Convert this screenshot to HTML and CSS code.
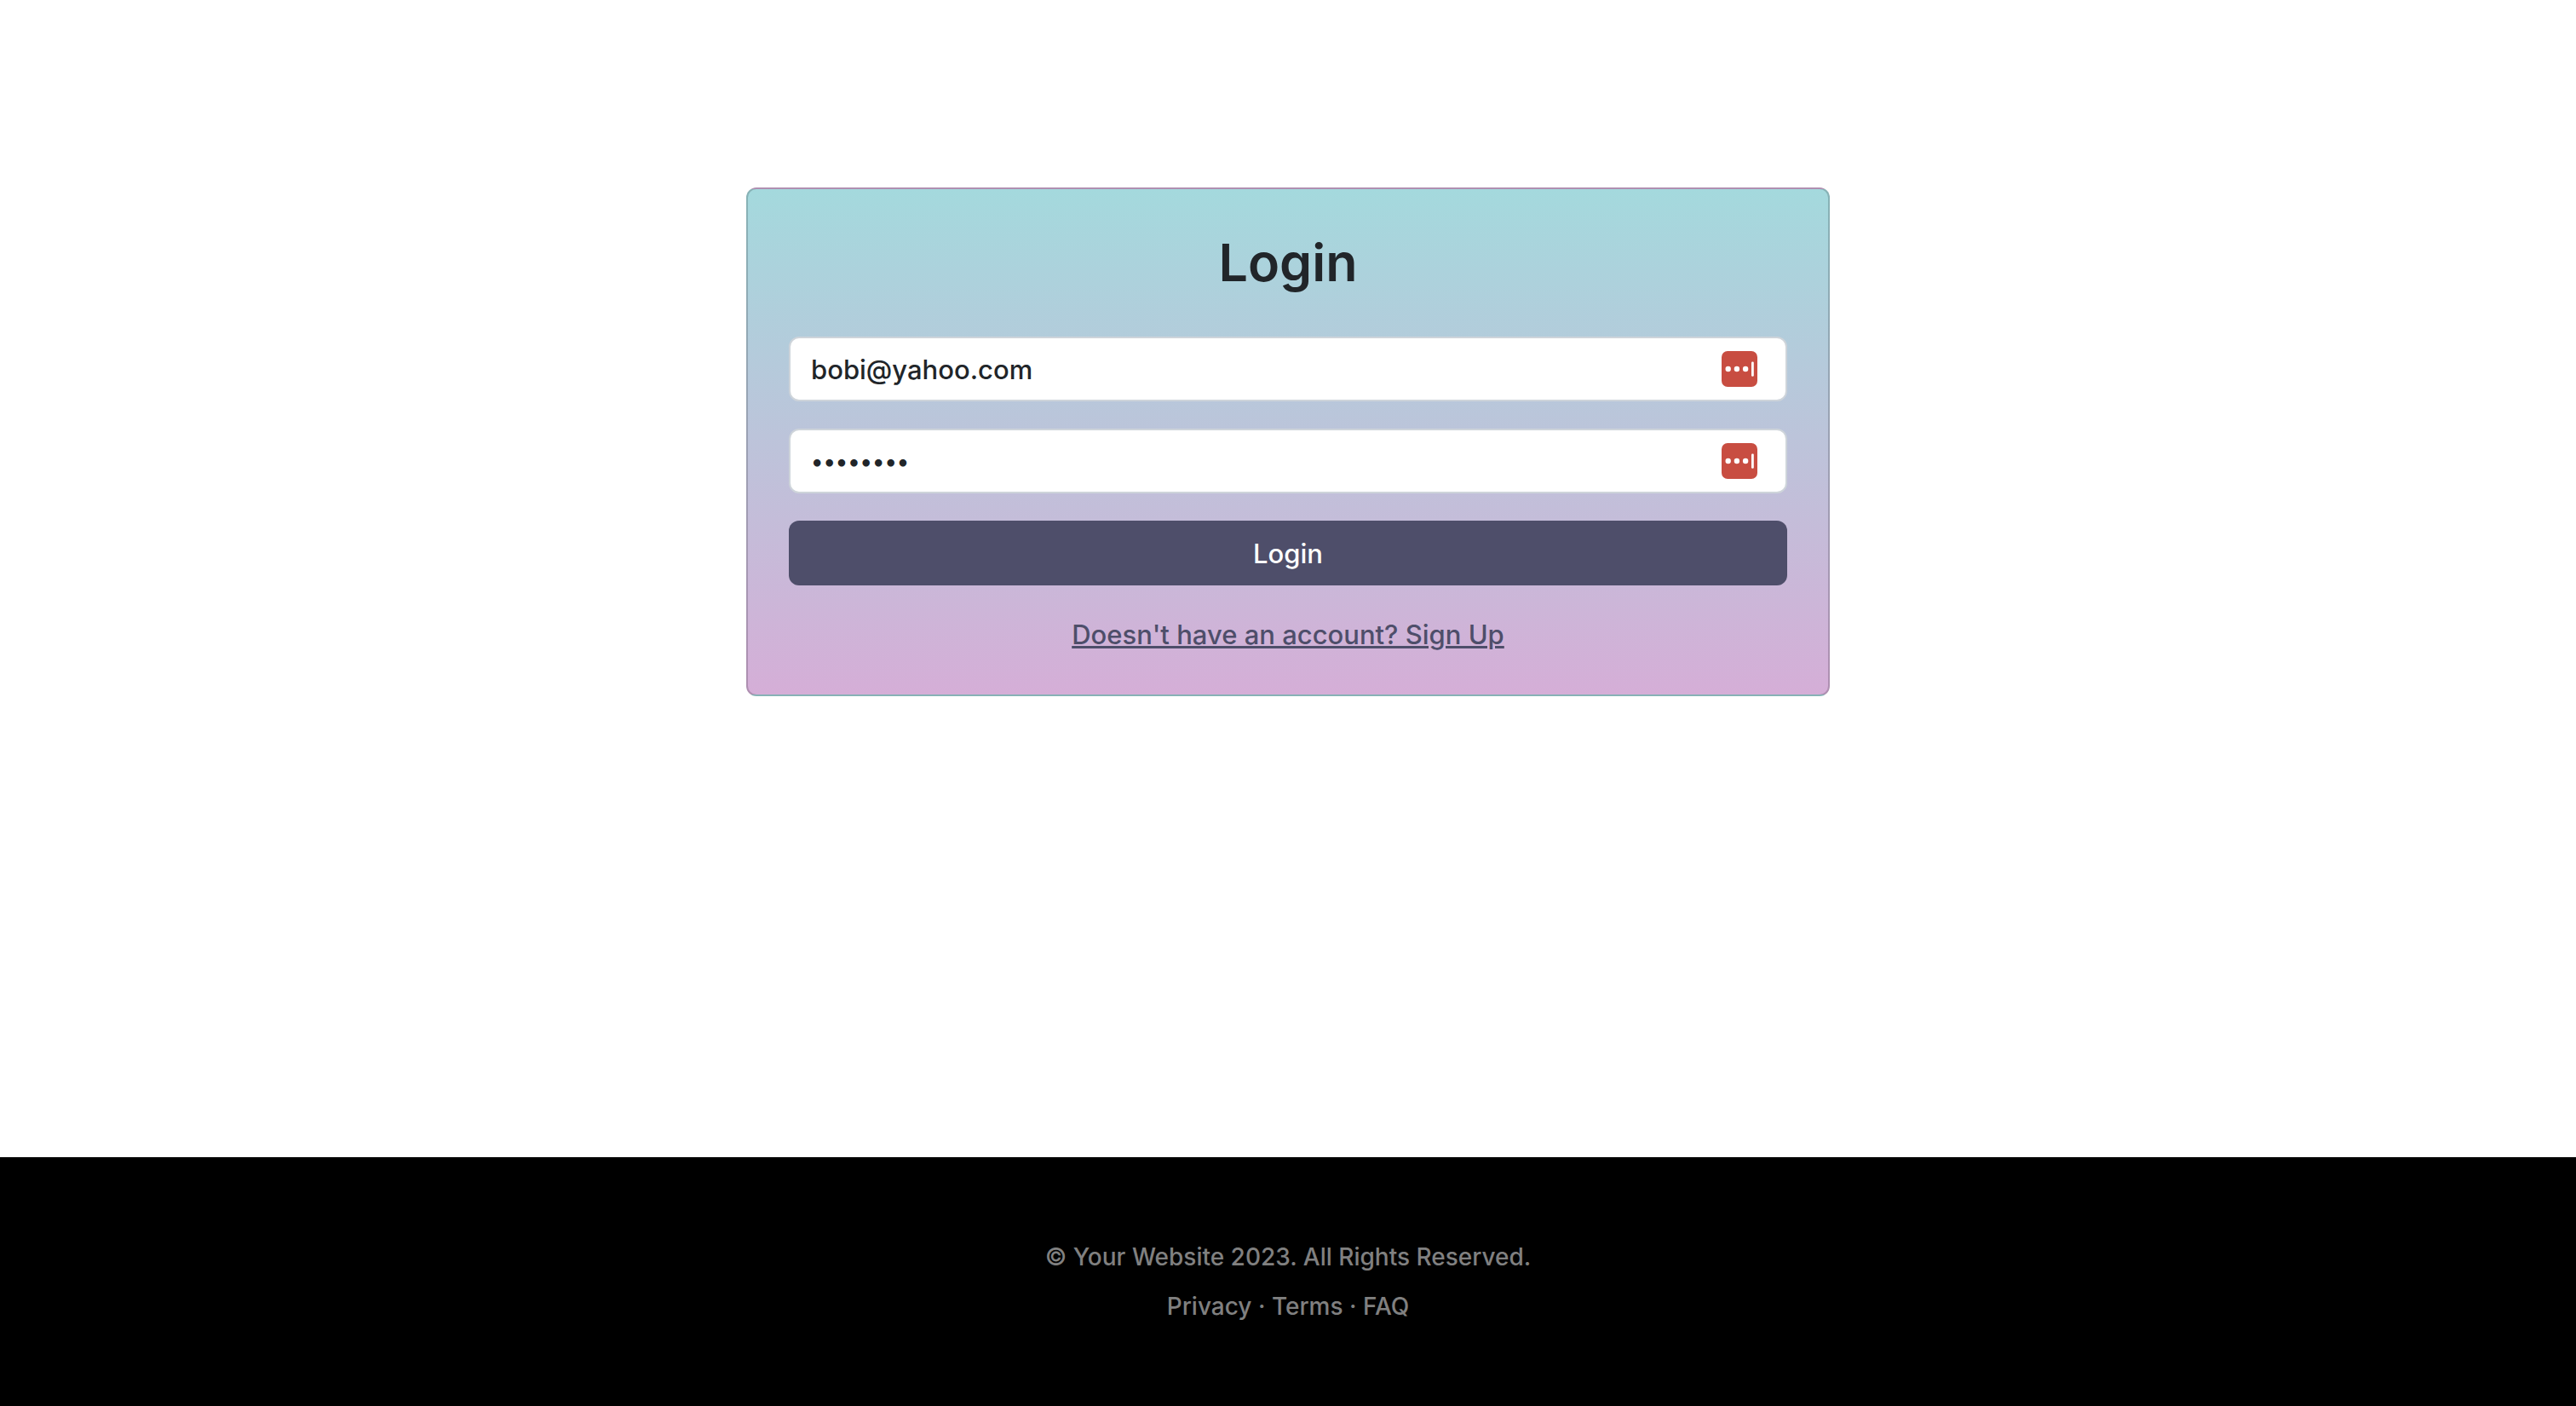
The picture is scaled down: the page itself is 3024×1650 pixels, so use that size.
FILE: index.html
```html
<!DOCTYPE html>
<html lang="en">
<head>
  <meta charset="utf-8">
  <meta name="viewport" content="width=device-width, initial-scale=1">
  <title>Login</title>
  <link rel="stylesheet" href="styles.css">
</head>
<body>
  <main class="page">
    <form class="card">
      <h1 class="card-title">Login</h1>
      <div class="field">
        <input class="field-input" type="email" name="email" value="bobi@yahoo.com" aria-label="Email">
        <svg class="field-icon" viewBox="0 0 42 42" aria-hidden="true">
          <rect width="42" height="42" rx="7" fill="#c84d41"/>
          <g fill="#fff">
            <circle cx="7.7" cy="21" r="3.2"/>
            <circle cx="17.9" cy="21" r="3.2"/>
            <circle cx="28.1" cy="21" r="3.2"/>
            <rect x="35" y="12.5" width="2.8" height="17.3" rx="1.2"/>
          </g>
        </svg>
      </div>
      <div class="field">
        <input class="field-input field-input-password" type="password" name="password" value="password" aria-label="Password">
        <svg class="field-icon" viewBox="0 0 42 42" aria-hidden="true">
          <rect width="42" height="42" rx="7" fill="#c84d41"/>
          <g fill="#fff">
            <circle cx="7.7" cy="21" r="3.2"/>
            <circle cx="17.9" cy="21" r="3.2"/>
            <circle cx="28.1" cy="21" r="3.2"/>
            <rect x="35" y="12.5" width="2.8" height="17.3" rx="1.2"/>
          </g>
        </svg>
      </div>
      <button class="submit" type="submit">Login</button>
      <a class="signup" href="#">Doesn't have an account? Sign Up</a>
    </form>
  </main>
  <footer class="footer">
    <p class="footer-line">© Your Website 2023. All Rights Reserved.</p>
    <p class="footer-line"><a href="#">Privacy</a> · <a href="#">Terms</a> · <a href="#">FAQ</a></p>
  </footer>
</body>
</html>
```
FILE: styles.css
```css
* {
  box-sizing: border-box;
}

body {
  margin: 0;
  min-height: 100vh;
  display: flex;
  flex-direction: column;
  background: #fff;
  color: #212529;
  font: 500 31px/48px Inter, "Liberation Sans", sans-serif;
}

.page {
  flex: 1;
  padding: 220px 24px 48px;
}

.card {
  width: 100%;
  max-width: 1272px;
  margin: 0 auto;
  padding: 48px 48px 46px;
  display: flex;
  flex-direction: column;
  border: 2px solid rgba(0, 0, 0, 0.175);
  border-radius: 12px;
  background: linear-gradient(#a4d9dd, #d5aed7);
}

.card-title {
  margin: 0 0 48px;
  font-size: 61px;
  line-height: 77px;
  font-weight: 600;
  text-align: center;
}

.field {
  position: relative;
  margin-bottom: 32px;
}

.field-input {
  display: block;
  width: 100%;
  height: 76px;
  padding: 12px 96px 12px 24px;
  border: 2px solid #ced4da;
  border-radius: 12px;
  background: #fff;
  color: inherit;
  font: inherit;
}

.field-input-password {
  font-size: 27px;
}

.field-icon {
  position: absolute;
  top: 17px;
  right: 35px;
  width: 42px;
  height: 42px;
}

.submit {
  height: 76px;
  margin-bottom: 34px;
  padding: 14px 24px 12px;
  border: 0;
  border-radius: 12px;
  background: #4e4e6a;
  color: #fff;
  font: inherit;
}

.signup {
  align-self: center;
  color: #4e4e6a;
}

.footer {
  padding: 96px 24px;
  background: #000;
  color: #808080;
  font-size: 28px;
  line-height: 42px;
  text-align: center;
}

.footer-line {
  margin: 0 0 16px;
}

.footer-line:last-child {
  margin: 0;
}

.footer-line a {
  color: inherit;
  text-decoration: none;
}
```
